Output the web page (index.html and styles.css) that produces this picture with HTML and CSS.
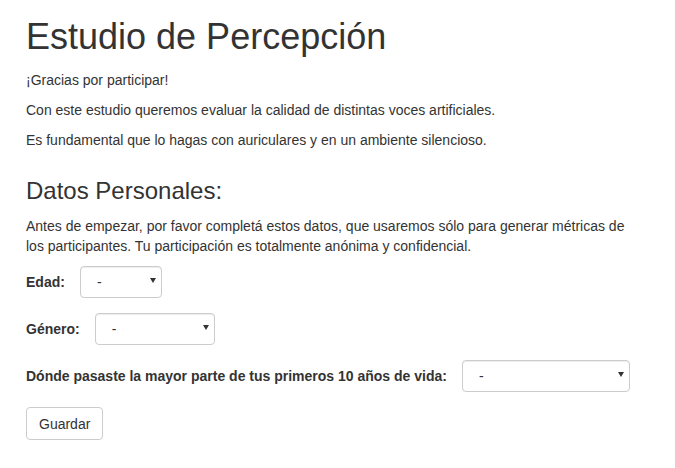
FILE: index.html
```html
<!DOCTYPE html>
<html lang="es">
<head>
<meta charset="utf-8">
<title>Estudio de Percepción</title>
<link rel="stylesheet" href="styles.css">
</head>
<body>
<div class="container">
  <h1 class="title">Estudio de Percepción</h1>
  <p>¡Gracias por participar!</p>
  <p>Con este estudio queremos evaluar la calidad de distintas voces artificiales.</p>
  <p>Es fundamental que lo hagas con auriculares y en un ambiente silencioso.</p>

  <h3 class="subtitle">Datos Personales:</h3>
  <p class="intro">Antes de empezar, por favor completá estos datos, que usaremos sólo para generar métricas de los participantes. Tu participación es totalmente anónima y confidencial.</p>

  <form class="form">
    <div class="form-group">
      <label class="label" for="edad">Edad:</label>
      <span class="select-wrap w-edad">
        <select id="edad" class="select"><option>-</option></select>
        <svg class="arrow" width="6" height="5" viewBox="0 0 6 5"><polygon points="0,0 6,0 3,5" fill="#333"/></svg>
      </span>
    </div>
    <div class="form-group">
      <label class="label" for="genero">Género:</label>
      <span class="select-wrap w-genero">
        <select id="genero" class="select"><option>-</option></select>
        <svg class="arrow" width="6" height="5" viewBox="0 0 6 5"><polygon points="0,0 6,0 3,5" fill="#333"/></svg>
      </span>
    </div>
    <div class="form-group">
      <label class="label" for="lugar">Dónde pasaste la mayor parte de tus primeros 10 años de vida:</label>
      <span class="select-wrap w-lugar">
        <select id="lugar" class="select"><option>-</option></select>
        <svg class="arrow" width="6" height="5" viewBox="0 0 6 5"><polygon points="0,0 6,0 3,5" fill="#333"/></svg>
      </span>
    </div>
    <button type="button" class="btn">Guardar</button>
  </form>
</div>
</body>
</html>
```

FILE: styles.css
```css
* { box-sizing: border-box; }
html, body { margin: 0; padding: 0; background: #fff; }
body {
  font-family: "Liberation Sans", Arial, Helvetica, sans-serif;
  font-size: 14px;
  line-height: 20px;
  color: #333;
}
.container {
  padding: 0 24px 0 26px;
  width: 650px;
}
.title {
  font-size: 36px;
  font-weight: normal;
  line-height: 39.6px;
  margin: 17px 0 13px;
}
p { margin: 0 0 10px; }
.subtitle {
  font-size: 24px;
  font-weight: normal;
  line-height: 26.4px;
  margin: 28px 0 12px;
}
.intro { margin-bottom: 10px; }
.form { margin: 0; }
.form-group {
  display: flex;
  align-items: center;
  margin-bottom: 15px;
}
.label {
  flex: none;
  white-space: nowrap;
  font-weight: bold;
  margin-right: 15px;
}
.select-wrap {
  position: relative;
  display: block;
  flex: none;
  height: 32px;
}
.w-edad { width: 82px; }
.w-genero { width: 120px; }
.w-lugar { width: 168px; }
.select {
  -webkit-appearance: none;
  appearance: none;
  width: 100%;
  height: 32px;
  margin: 0;
  padding: 0 16px;
  font-family: inherit;
  font-size: 14px;
  color: #333;
  background: #fff;
  border: 1px solid #ccc;
  border-radius: 4px;
  box-shadow: inset 0 1px 1px rgba(0,0,0,.075);
}
.arrow {
  position: absolute;
  right: 6px;
  top: 12px;
  pointer-events: none;
}
.btn {
  display: block;
  height: 33px;
  padding: 6px 12px;
  font-family: inherit;
  font-size: 14px;
  line-height: 20px;
  color: #333;
  background: #fff;
  border: 1px solid #ccc;
  border-radius: 4px;
}
```
